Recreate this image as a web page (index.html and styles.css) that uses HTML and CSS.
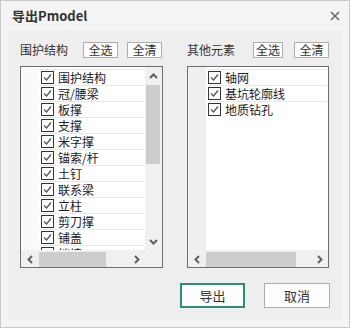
FILE: index.html
```html
<!DOCTYPE html>
<html lang="zh">
<head>
<meta charset="utf-8">
<link rel="stylesheet" href="styles.css">
</head>
<body>
<div class="window">
  <div class="titlebar">
    <span class="title">导出Pmodel</span>
    <svg class="close" width="10" height="10" viewBox="0 0 10 10"><path d="M1 1L9 9M9 1L1 9" stroke="#6a6a6a" stroke-width="1.6"/></svg>
  </div>
  <div class="panel">
    <div class="groups">
      <div class="group group-left">
        <div class="group-head">
          <span class="label">围护结构</span>
          <button class="btn-sm">全选</button>
          <button class="btn-sm">全清</button>
        </div>
        <div class="listbox">
          <div class="list-main">
            <div class="gutter"></div>
            <div class="rows">
              <div class="row"><span class="cb"><svg width="11" height="11" viewBox="0 0 11 11"><path d="M2 5.5L4.5 8L9 2.5" fill="none" stroke="#555" stroke-width="1.3"/></svg></span><span>围护结构</span></div>
              <div class="row"><span class="cb"><svg width="11" height="11" viewBox="0 0 11 11"><path d="M2 5.5L4.5 8L9 2.5" fill="none" stroke="#555" stroke-width="1.3"/></svg></span><span>冠/腰梁</span></div>
              <div class="row"><span class="cb"><svg width="11" height="11" viewBox="0 0 11 11"><path d="M2 5.5L4.5 8L9 2.5" fill="none" stroke="#555" stroke-width="1.3"/></svg></span><span>板撑</span></div>
              <div class="row"><span class="cb"><svg width="11" height="11" viewBox="0 0 11 11"><path d="M2 5.5L4.5 8L9 2.5" fill="none" stroke="#555" stroke-width="1.3"/></svg></span><span>支撑</span></div>
              <div class="row"><span class="cb"><svg width="11" height="11" viewBox="0 0 11 11"><path d="M2 5.5L4.5 8L9 2.5" fill="none" stroke="#555" stroke-width="1.3"/></svg></span><span>米字撑</span></div>
              <div class="row"><span class="cb"><svg width="11" height="11" viewBox="0 0 11 11"><path d="M2 5.5L4.5 8L9 2.5" fill="none" stroke="#555" stroke-width="1.3"/></svg></span><span>锚索/杆</span></div>
              <div class="row"><span class="cb"><svg width="11" height="11" viewBox="0 0 11 11"><path d="M2 5.5L4.5 8L9 2.5" fill="none" stroke="#555" stroke-width="1.3"/></svg></span><span>土钉</span></div>
              <div class="row"><span class="cb"><svg width="11" height="11" viewBox="0 0 11 11"><path d="M2 5.5L4.5 8L9 2.5" fill="none" stroke="#555" stroke-width="1.3"/></svg></span><span>联系梁</span></div>
              <div class="row"><span class="cb"><svg width="11" height="11" viewBox="0 0 11 11"><path d="M2 5.5L4.5 8L9 2.5" fill="none" stroke="#555" stroke-width="1.3"/></svg></span><span>立柱</span></div>
              <div class="row"><span class="cb"><svg width="11" height="11" viewBox="0 0 11 11"><path d="M2 5.5L4.5 8L9 2.5" fill="none" stroke="#555" stroke-width="1.3"/></svg></span><span>剪刀撑</span></div>
              <div class="row"><span class="cb"><svg width="11" height="11" viewBox="0 0 11 11"><path d="M2 5.5L4.5 8L9 2.5" fill="none" stroke="#555" stroke-width="1.3"/></svg></span><span>铺盖</span></div>
              <div class="row"><span class="cb"><svg width="11" height="11" viewBox="0 0 11 11"><path d="M2 5.5L4.5 8L9 2.5" fill="none" stroke="#555" stroke-width="1.3"/></svg></span><span>挡墙</span></div>
            </div>
            <div class="vscroll">
              <div class="arrow"><svg width="9" height="6" viewBox="0 0 9 6"><path d="M1 5L4.5 1.5L8 5" fill="none" stroke="#606060" stroke-width="2"/></svg></div>
              <div class="vtrack"><div class="vthumb"></div></div>
              <div class="arrow"><svg width="9" height="6" viewBox="0 0 9 6"><path d="M1 1L4.5 4.5L8 1" fill="none" stroke="#606060" stroke-width="2"/></svg></div>
            </div>
          </div>
          <div class="hbar">
            <div class="hscroll">
              <div class="harrow"><svg width="6" height="9" viewBox="0 0 6 9"><path d="M5 1L1.5 4.5L5 8" fill="none" stroke="#606060" stroke-width="2"/></svg></div>
              <div class="htrack"><div class="hthumb hthumb-left"></div></div>
              <div class="harrow"><svg width="6" height="9" viewBox="0 0 6 9"><path d="M1 1L4.5 4.5L1 8" fill="none" stroke="#606060" stroke-width="2"/></svg></div>
            </div>
            <div class="corner"></div>
          </div>
        </div>
      </div>
      <div class="group group-right">
        <div class="group-head">
          <span class="label">其他元素</span>
          <button class="btn-sm btn-narrow">全选</button>
          <button class="btn-sm">全清</button>
        </div>
        <div class="listbox">
          <div class="list-main">
            <div class="gutter gutter-gray"></div>
            <div class="rows">
              <div class="row"><span class="cb"><svg width="11" height="11" viewBox="0 0 11 11"><path d="M2 5.5L4.5 8L9 2.5" fill="none" stroke="#555" stroke-width="1.3"/></svg></span><span>轴网</span></div>
              <div class="row"><span class="cb"><svg width="11" height="11" viewBox="0 0 11 11"><path d="M2 5.5L4.5 8L9 2.5" fill="none" stroke="#555" stroke-width="1.3"/></svg></span><span>基坑轮廓线</span></div>
              <div class="row"><span class="cb"><svg width="11" height="11" viewBox="0 0 11 11"><path d="M2 5.5L4.5 8L9 2.5" fill="none" stroke="#555" stroke-width="1.3"/></svg></span><span>地质钻孔</span></div>
            </div>
          </div>
          <div class="hbar">
            <div class="hscroll">
              <div class="harrow"><svg width="6" height="9" viewBox="0 0 6 9"><path d="M5 1L1.5 4.5L5 8" fill="none" stroke="#606060" stroke-width="2"/></svg></div>
              <div class="htrack"><div class="hthumb hthumb-right"></div></div>
              <div class="harrow"><svg width="6" height="9" viewBox="0 0 6 9"><path d="M1 1L4.5 4.5L1 8" fill="none" stroke="#606060" stroke-width="2"/></svg></div>
            </div>
          </div>
        </div>
      </div>
    </div>
    <div class="footer">
      <button class="btn btn-primary">导出</button>
      <button class="btn">取消</button>
    </div>
  </div>
</div>
</body>
</html>
```

FILE: styles.css
```css
* { box-sizing: border-box; }
html, body { margin: 0; padding: 0; background: #f4f4f4; }
body {
  font-family: "Noto Sans CJK SC", "Liberation Sans", sans-serif;
  color: #333;
}
.window {
  width: 350px;
  height: 328px;
  border: 1px solid #c9c9c9;
  background: #f4f4f4;
  display: flex;
  flex-direction: column;
}
.titlebar {
  height: 30px;
  flex: none;
  display: flex;
  align-items: center;
  justify-content: space-between;
  padding: 0 9px 0 11px;
}
.title {
  font-size: 13px;
  font-weight: bold;
  color: #333;
  line-height: 16px;
}
.close { display: block; }
.panel {
  flex: 1;
  margin: 0 7px 7px;
  background: #eeeeee;
  padding: 11px 13px 0 12px;
  display: flex;
  flex-direction: column;
}
.groups {
  display: flex;
  gap: 24px;
}
.group-left { width: 143px; }
.group-right { width: 142px; }
.group-head {
  height: 16px;
  display: flex;
  align-items: center;
  gap: 9px;
}
.group-right .group-head { gap: 11px; }
.label {
  font-size: 12px;
  line-height: 16px;
  margin-right: auto;
  color: #333;
}
.btn-sm {
  width: 35px;
  height: 16px;
  padding: 0;
  border: 1px solid #adadad;
  background: #fdfdfd;
  font-family: inherit;
  font-size: 12px;
  line-height: 14px;
  color: #333;
}
.btn-narrow { width: 30px; }
.group-left .btn-sm:last-child { margin-right: 1px; }
.listbox {
  margin-top: 8px;
  height: 202px;
  border: 1px solid #6e6e6e;
  background: #fff;
  display: flex;
  flex-direction: column;
}
.list-main {
  flex: 1;
  display: flex;
  min-height: 0;
  overflow: hidden;
}
.gutter {
  width: 17px;
  flex: none;
  background: #fafafa;
}
.gutter-gray { width: 18px; background: #efefef; }
.rows {
  flex: 1;
  padding-top: 2px;
  padding-right: 1px;
  overflow: hidden;
}
.row {
  height: 16px;
  border-top: 1px solid #e8e8e8;
  display: flex;
  align-items: center;
  font-size: 12px;
  line-height: 15px;
  color: #222;
  white-space: nowrap;
}
.cb {
  width: 13px;
  height: 13px;
  border: 1px solid #333;
  background: #fff;
  margin-left: 3px;
  margin-right: 4px;
  display: flex;
  align-items: center;
  justify-content: center;
  flex: none;
}
.group-right .cb { margin-left: 2px; }
.cb svg { display: block; }
.vscroll {
  width: 17px;
  flex: none;
  background: #f0f0f0;
  display: flex;
  flex-direction: column;
}
.arrow {
  height: 17px;
  display: flex;
  align-items: center;
  justify-content: center;
  flex: none;
}
.vtrack { flex: 1; padding: 1px 2px 0 1px; }
.vthumb { height: 79px; background: #cdcdcd; }
.hbar {
  height: 17px;
  flex: none;
  display: flex;
  border-top: 1px solid #f0f0f0;
}
.hscroll {
  flex: 1;
  display: flex;
  background: #f0f0f0;
}
.harrow {
  width: 17px;
  flex: none;
  display: flex;
  align-items: center;
  justify-content: center;
}
.htrack { flex: 1; padding: 1px 0 0 1px; }
.hthumb { height: 15px; background: #cdcdcd; }
.hthumb-left { width: 67px; }
.hthumb-right { width: 90px; }
.corner { width: 17px; flex: none; background: #f0f0f0; }
.footer {
  display: flex;
  justify-content: flex-end;
  gap: 19px;
  margin-top: 15px;
  margin-right: -1px;
}
.btn {
  width: 66px;
  height: 25px;
  padding: 0;
  border: 1px solid #adadad;
  background: #fdfdfd;
  font-family: inherit;
  font-size: 13px;
  color: #333;
}
.btn-primary {
  width: 65px;
  border: 2px solid #2f8c7b;
}
```
